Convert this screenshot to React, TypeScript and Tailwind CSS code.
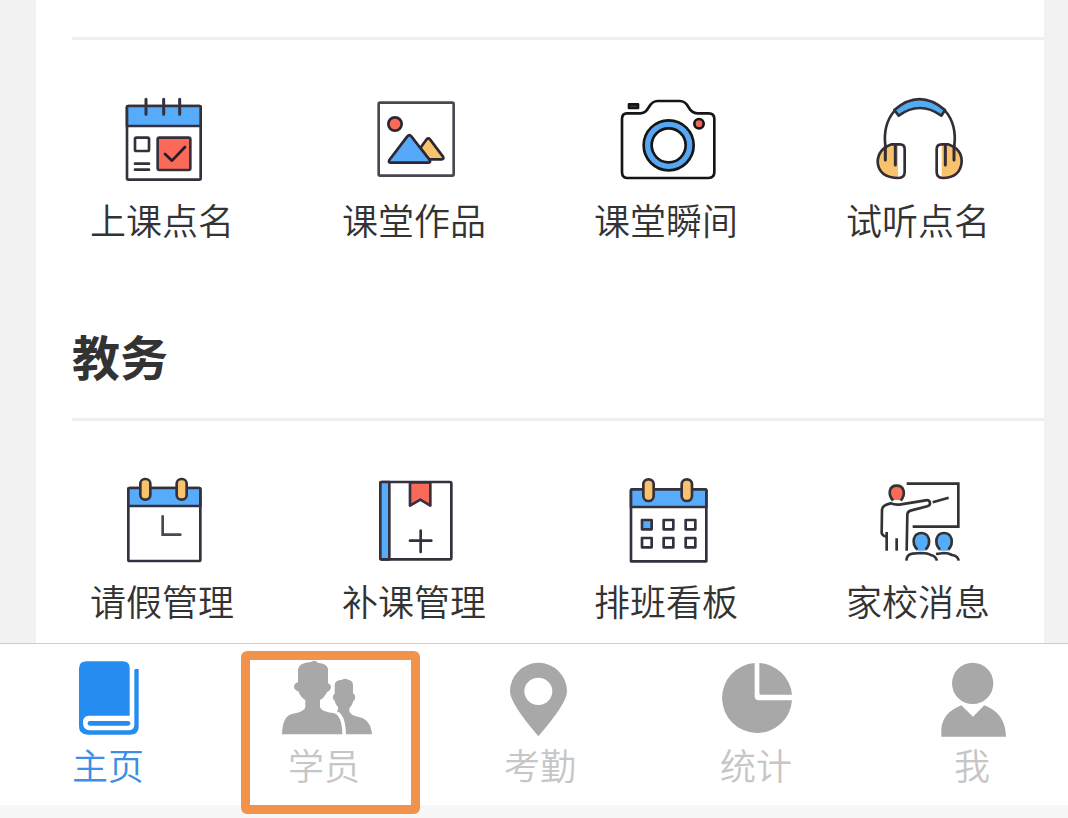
import { ReactNode } from "react";
import clsx from "clsx";

interface IEntry {
  label: string;
  icon: ReactNode;
}

const iconClass = "w-24 h-24 shrink-0 overflow-visible";

const rollCallIcon = (
  <svg
    viewBox="102 18 288 288"
    className={iconClass}
    fill="none"
    stroke="#35303d"
    strokeWidth="8"
    strokeLinecap="round"
    strokeLinejoin="round"
    aria-hidden="true"
  >
    <rect x="141" y="63" width="221" height="221" rx="4" fill="#fff" />
    <path d="M141 123V66q0-3 3-3h215q3 0 3 3v57z" fill="#56acfb" />
    <path d="M198 43v45M251 43v45M299 43v45" strokeWidth="9" />
    <rect x="165" y="158" width="42" height="40" rx="4" />
    <path d="M165 236h42M165 254h42" />
    <rect x="233" y="158" width="98" height="97" rx="5" fill="#fb6a58" />
    <path d="M255 207l21 20 39-41" stroke="#241c26" />
  </svg>
);

const worksIcon = (
  <svg
    viewBox="93 18 288 288"
    className={iconClass}
    fill="none"
    stroke="#2d2733"
    strokeWidth="8"
    strokeLinejoin="round"
    aria-hidden="true"
  >
    <rect
      x="131"
      y="53"
      width="225"
      height="219"
      rx="4"
      stroke="#4b4651"
    />
    <circle cx="180" cy="117" r="20" fill="#fb6a58" />
    <path
      d="M256 189l19-26q5-6 10 0l39 52q4 8-4 8h-38z"
      fill="#f8c36c"
    />
    <path
      d="M163 225l54-71q6-7 12 0l55 71q4 8-5 8H168q-9 0-5-8z"
      fill="#56a8f8"
    />
  </svg>
);

const cameraIcon = (
  <svg
    viewBox="99 18 288 288"
    className={iconClass}
    fill="none"
    stroke="#151515"
    strokeWidth="8"
    strokeLinejoin="round"
    aria-hidden="true"
  >
    <path d="M126 85h40c14 0 19-8 26-19q10-18 26-18h66q17 0 26 18c7 12 13 19 27 19h34q17 0 17 17v159q0 18-17 18H126q-15 0-15-18V102q0-17 15-17z" />
    <rect x="132" y="58" width="27" height="11" fill="#4a4a42" />
    <circle cx="251" cy="181" r="64" stroke="#58a5f2" strokeWidth="22" />
    <circle cx="251" cy="181" r="75" />
    <circle cx="251" cy="181" r="51" />
    <circle cx="342" cy="116" r="14" fill="#ef6556" />
  </svg>
);

const headphoneIcon = (
  <svg
    viewBox="105 18 288 288"
    className={iconClass}
    fill="none"
    stroke="#342c37"
    strokeWidth="8"
    strokeLinecap="round"
    strokeLinejoin="round"
    aria-hidden="true"
  >
    <path d="M151 182c-5-43 4-77 27-104M358 182c5-43-4-77-27-104" />
    <path
      d="M178 75q75-65 152 0l-11 17q-65-46-128 0z"
      fill="#51acf2"
    />
    <path
      d="M189 178q-60-2-60 53 5 48 60 48z"
      fill="#f8c36c"
      stroke="none"
    />
    <path
      d="M320 178q60-2 60 53-5 48-60 48z"
      fill="#f8c36c"
      stroke="none"
    />
    <path d="M170 178h25q14 0 14 14v69q0 18-18 18-60-1-63-48 1-39 42-53z" />
    <path d="M339 178h-19q-15 0-15 14v69q0 18 18 18 53-1 57-48 1-39-41-53z" />
    <path d="M151 183v42M181 183v57M331 183v57M357 183v42" strokeWidth="9" />
  </svg>
);

const leaveIcon = (
  <svg
    viewBox="102 21 288 288"
    className={iconClass}
    fill="none"
    stroke="#35303d"
    strokeWidth="8"
    strokeLinecap="round"
    strokeLinejoin="round"
    aria-hidden="true"
  >
    <rect x="145" y="69" width="216" height="219" rx="4" fill="#fff" />
    <path d="M145 123V72q0-3 3-3h210q3 0 3 3v51z" fill="#56acfb" />
    <rect x="181" y="42" width="30" height="62" rx="14" fill="#f8c36c" />
    <rect x="290" y="42" width="30" height="62" rx="14" fill="#f8c36c" />
    <path d="M248 154v55h53" stroke="#4b4651" strokeLinejoin="miter" />
  </svg>
);

const makeUpIcon = (
  <svg
    viewBox="93 21 288 288"
    className={iconClass}
    fill="none"
    stroke="#35303d"
    strokeWidth="8"
    strokeLinecap="round"
    strokeLinejoin="round"
    aria-hidden="true"
  >
    <rect x="136" y="51" width="213" height="232" rx="4" />
    <path d="M136 54q0-3 3-3h24v232h-24q-3 0-3-3z" fill="#56acfb" />
    <path d="M225 52v70l31-18 30 18V52z" fill="#fb6a58" />
    <path d="M257 197v64M225 227h64" />
  </svg>
);

const scheduleIcon = (
  <svg
    viewBox="99 21 288 288"
    className={iconClass}
    fill="none"
    stroke="#35303d"
    strokeWidth="8"
    strokeLinejoin="round"
    aria-hidden="true"
  >
    <path d="M138 289V77q0-4 4-4h218q4 0 4 4v212z" />
    <path d="M138 126V77q0-4 4-4h218q4 0 4 4v49z" fill="#56acfb" />
    <rect x="175" y="43" width="31" height="65" rx="15" fill="#f8c36c" />
    <rect x="290" y="43" width="31" height="65" rx="15" fill="#f8c36c" />
    <rect x="171" y="165" width="29" height="28" fill="#56acfb" />
    <rect x="236" y="165" width="29" height="28" />
    <rect x="302" y="165" width="29" height="28" />
    <rect x="171" y="219" width="29" height="28" />
    <rect x="236" y="219" width="29" height="28" />
    <rect x="302" y="219" width="29" height="28" />
  </svg>
);

const messageIcon = (
  <svg
    viewBox="105 21 288 288"
    className={iconClass}
    fill="none"
    stroke="#333"
    strokeWidth="8"
    aria-hidden="true"
  >
    <path d="M215 56h155v129H233" />
    <path d="M174 105c-17-21-9-44 11-44s30 21 12 44z" fill="#fb6a58" stroke="none" />
    <path d="M174 107c-17-21-11-45 11-45s29 24 12 45" />
    <path d="M155 201v56M185 220v37M215 257l2-108q0-10 12-13l48-12q9-3 8-11-2-9-13-7l-74 12q-17 3-31-3-26 5-26 20l-1 69q2 9 14 11" />
    <path d="M293 112l48-14" />
    <path
      d="M247 257c-21-22-11-53 12-53s34 31 13 53zM315 257c-21-22-11-53 12-53s34 31 13 53z"
      fill="#56acfb"
      stroke="none"
    />
    <path d="M247 254c-20-22-11-50 12-50s32 28 13 50M315 254c-20-22-11-50 12-50s32 28 13 50" />
    <path d="M214 287q2-20 19-21 15-1 27-2 18 0 27 6 15 3 19 17M303 267q13-2 24-3 14 0 24 6 18 3 20 17" />
  </svg>
);

const homeIcon = (
  <svg
    viewBox="180 45 288 288"
    className={iconClass}
    fill="#268cef"
    aria-hidden="true"
  >
    <path d="M260 79h109q20 0 20 20v143H267q-18 0-18 20 0 24 20 24h116q18 0 18-18V106q0-4 4-4h9v174q0 23-26 23H263q-26 0-26-25V101q0-22 23-22z" />
    <rect x="263" y="258" width="128" height="14" rx="7" />
  </svg>
);

const studentIcon = (
  <svg
    viewBox="123 30 288 288"
    className={iconClass}
    fill="#a8a8a8"
    aria-hidden="true"
  >
    <path d="M141 283Q142 230 170 222Q211 215 211 201V181Q196 171 190 154Q179 151 177 141Q177 131 189 127V88Q191 68 228 66Q240 58 248 68Q277 70 279 88V130Q288 133 288 142Q287 152 276 156Q270 171 255 180V201Q256 214 298 220Q321 228 322 283Z" />
    <path d="M333 283Q332 240 318 223Q314 217 306 214Q311 209 309 201Q301 193 299 182Q294 179 293 172Q293 165 299 162V134Q300 120 321 119Q330 113 339 119Q353 121 354 134V160Q361 165 361 172Q360 180 355 183Q352 195 343 205V214Q346 226 368 230Q407 236 411 283Z" />
  </svg>
);

const attendanceIcon = (
  <svg
    viewBox="36 30 288 288"
    className={iconClass}
    fill="#a8a8a8"
    aria-hidden="true"
  >
    <path
      fillRule="evenodd"
      d="M175 289Q90 190 90 154a85 85 0 0 1 171 0q0 36-86 135zM175 113a42 41 0 1 0 0 82 42 41 0 0 0 0-82z"
    />
  </svg>
);

const statsIcon = (
  <svg
    viewBox="684 30 288 288"
    className={iconClass}
    fill="#a8a8a8"
    aria-hidden="true"
  >
    <path d="M824 69A105 105 0 1 0 936 181H836q-12 0-12-12z" />
    <path d="M838 69A105 105 0 0 1 936 164H843q-5 0-5-5z" />
  </svg>
);

const mineIcon = (
  <svg
    viewBox="252 45 288 288"
    className={iconClass}
    fill="#a8a8a8"
    aria-hidden="true"
  >
    <circle cx="398" cy="145" r="62" />
    <path d="M304 305v-24q5-49 60-70l35 34 34-34q63 23 65 94z" />
  </svg>
);

const classEntries: IEntry[] = [
  { label: "上课点名", icon: rollCallIcon },
  { label: "课堂作品", icon: worksIcon },
  { label: "课堂瞬间", icon: cameraIcon },
  { label: "试听点名", icon: headphoneIcon },
];

const affairEntries: IEntry[] = [
  { label: "请假管理", icon: leaveIcon },
  { label: "补课管理", icon: makeUpIcon },
  { label: "排班看板", icon: scheduleIcon },
  { label: "家校消息", icon: messageIcon },
];

const tabs: IEntry[] = [
  { label: "主页", icon: homeIcon },
  { label: "学员", icon: studentIcon },
  { label: "考勤", icon: attendanceIcon },
  { label: "统计", icon: statsIcon },
  { label: "我", icon: mineIcon },
];

const activeTab = "主页";
const markedTab = "学员";

const EntryGrid = ({ entries }: { entries: IEntry[] }) => (
  <div className="grid grid-cols-4">
    {entries.map((entry) => (
      <a
        key={entry.label}
        href="#"
        className="flex flex-col items-center gap-2 text-4xl leading-[48px] font-[350] whitespace-nowrap text-[#333333]"
      >
        {entry.icon}
        {entry.label}
      </a>
    ))}
  </div>
);

export default function App() {
  return (
    <div className="min-h-screen overflow-hidden bg-[#f7f7f7] font-['Noto_Sans_CJK_SC',sans-serif]">
      <div className="bg-[#f2f2f2] pl-9 pr-6">
        <main className="bg-white pt-[37px] pb-[19px]">
          <section>
            <hr className="ml-9 border-t-[3px] border-[#efefef]" />
            <div className="pt-[51px]">
              <EntryGrid entries={classEntries} />
            </div>
          </section>
          <section className="pt-[76px]">
            <h2 className="pl-9 text-5xl leading-[72px] font-bold text-[#333333]">
              教务
            </h2>
            <hr className="mt-[27px] ml-9 border-t-[3px] border-[#efefef]" />
            <div className="pt-[51px]">
              <EntryGrid entries={affairEntries} />
            </div>
          </section>
        </main>
      </div>
      <nav className="border-t border-[#cccccc] bg-white">
        <div className="-mr-3 grid grid-cols-5">
          {tabs.map((tab) => (
            <a
              key={tab.label}
              href="#"
              className={clsx(
                "relative flex flex-col items-center pt-[6px] pb-[23px] text-4xl leading-9 font-[350]",
                tab.label === activeTab ? "text-[#3d8ee6]" : "text-[#c6c6c6]"
              )}
            >
              {tab.icon}
              {tab.label}
              {tab.label === markedTab && (
                <span className="absolute top-[7px] right-3 -bottom-[9px] left-[25px] rounded-md border-[9px] border-[#f2934b]" />
              )}
            </a>
          ))}
        </div>
      </nav>
    </div>
  );
}
